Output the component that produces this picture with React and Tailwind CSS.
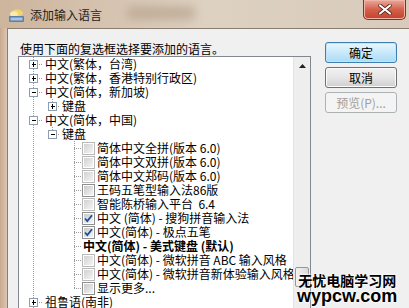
const rows = [
  { t: '中文(繁体，台湾)', lv: 0, exp: '+' },
  { t: '中文(繁体，香港特别行政区)', lv: 0, exp: '+' },
  { t: '中文(简体，新加坡)', lv: 0, exp: '-' },
  { t: '键盘', lv: 1, exp: '+' },
  { t: '中文(简体，中国)', lv: 0, exp: '-' },
  { t: '键盘', lv: 1, exp: '-' },
  { t: '简体中文全拼(版本 6.0)', lv: 2, cb: 'light' },
  { t: '简体中文双拼(版本 6.0)', lv: 2, cb: 'light' },
  { t: '简体中文郑码(版本 6.0)', lv: 2, cb: 'light' },
  { t: '王码五笔型输入法86版', lv: 2, cb: 'off' },
  { t: '智能陈桥输入平台  6.4', lv: 2, cb: 'light' },
  { t: '中文 (简体) - 搜狗拼音输入法', lv: 2, cb: 'on' },
  { t: '中文(简体) - 极点五笔', lv: 2, cb: 'on' },
  { t: '中文(简体) - 美式键盘 (默认)', lv: 2, bold: true },
  { t: '中文(简体) - 微软拼音 ABC 输入风格', lv: 2, cb: 'light' },
  { t: '中文(简体) - 微软拼音新体验输入风格', lv: 2, cb: 'light' },
  { t: '显示更多...', lv: 2, cb: 'off', last: true },
  { t: '祖鲁语(南非)', lv: 0, exp: '+' },
];

const DOT = '#9c9c9c';

// one guide column of the tree: dotted lines and an optional +/- box
const Guide = ({ w, x, top = true, bottom = true, h, box }) => (
  <svg width={w} height={14} className="shrink-0 block" shapeRendering="crispEdges">
    {(top || bottom) && (
      <line x1={x + 0.5} x2={x + 0.5} y1={top ? 0 : 7} y2={bottom ? 14 : 7} stroke={DOT} strokeDasharray="1 1" />
    )}
    {h && <line x1={x} x2={h} y1={7.5} y2={7.5} stroke={DOT} strokeDasharray="1 1" />}
    {box && (
      <g>
        <rect x={x - 3.5} y={3.5} width={8} height={8} fill="#fff" stroke="#8f9db0" />
        <line x1={x - 1} x2={x + 3} y1={7.5} y2={7.5} stroke="#000" />
        {box === '+' && <line x1={x + 0.5} x2={x + 0.5} y1={5} y2={10} stroke="#000" />}
      </g>
    )}
  </svg>
);

const Check = ({ kind }) => {
  const border = kind === 'light' ? '#b9b9b9' : '#8e8f8f';
  return (
    <svg width={13} height={13} className="shrink-0 block" shapeRendering="crispEdges">
      <defs>
        <linearGradient id={`cb-${kind}`} x1="0" y1="0" x2="1" y2="1">
          <stop offset="0" stopColor={kind === 'light' ? '#d2d2d2' : '#c9c9c9'} />
          <stop offset="1" stopColor="#f4f4f4" />
        </linearGradient>
      </defs>
      <rect x={0.5} y={0.5} width={12} height={12} fill="#fff" stroke={border} />
      <rect x={2} y={2} width={9} height={9} fill={`url(#cb-${kind})`} />
      {kind === 'on' && (
        <path d="M3 6.5 L5.3 9 L10 3.2" fill="none" stroke="#1d4c9c" strokeWidth="1.8" shapeRendering="auto" />
      )}
    </svg>
  );
};

const TreeRow = ({ r }) => (
  <div className="flex items-center h-[14px]">
    {r.lv === 0 ? (
      <Guide w={24} x={14} h={24} box={r.exp} />
    ) : (
      <Guide w={24} x={14} />
    )}
    {r.lv === 1 && <Guide w={17} x={9} bottom={false} h={17} box={r.exp} />}
    {r.lv === 2 && (
      <>
        <div className="w-[17px] shrink-0" />
        <Guide w={22} x={14} bottom={!r.last} h={22} />
      </>
    )}
    {r.cb && <Check kind={r.cb} />}
    <span className={`whitespace-pre text-[12px] leading-[14px] text-black ${r.bold ? 'font-bold ml-[1px]' : 'ml-[2px]'}`}>
      {r.t}
    </span>
  </div>
);

const Btn = ({ children, kind }) => {
  const cls =
    kind === 'default'
      ? 'border-[#3c7fb1] bg-gradient-to-b from-[#eaf6fd] to-[#a9dbf6] shadow-[inset_0_0_0_1px_#bfe6fa]'
      : kind === 'disabled'
      ? 'border-[#adb2b5] bg-[#f4f4f4] text-[#a0a0a0]'
      : 'border-[#707070] bg-gradient-to-b from-[#f2f2f2] via-[#e6e6e6] to-[#cfcfcf] shadow-[inset_0_0_0_1px_#fbfbfb]';
  return (
    <div className={`w-[72px] h-[21px] rounded-[3px] border flex items-center justify-center text-[12px] ${cls}`}>
      {children}
    </div>
  );
};

export default function App() {
  return (
    <div className="relative w-[409px] h-[308px] overflow-hidden bg-gradient-to-r from-[#cdb49c] via-[#ddd1c2] to-[#d8cbbb] font-['Noto_Sans_CJK_SC','Liberation_Sans',sans-serif] text-black">
      {/* title bar */}
      <div className="flex h-[28px]">
        <div className="flex items-center pl-[8px] pt-[2px] gap-[5px]">
          <svg width="17" height="15" viewBox="0 0 17 15">
            <ellipse cx="9" cy="5" rx="6" ry="3.5" fill="#f3d36b" />
            <ellipse cx="6" cy="6" rx="4" ry="2.5" fill="#fbeab0" />
            <rect x="1" y="8" width="15" height="6" rx="1" fill="#5b7fa6" />
            <rect x="2.5" y="9.5" width="12" height="3" fill="#a8c3df" />
          </svg>
          <span className="text-[12px] leading-[14px] text-[#1e1e1e]">添加输入语言</span>
        </div>
        <div className="ml-[24px] mt-[6px] w-[70px] h-[14px] rounded-full bg-[#b8a48e] blur-[5px] opacity-70" />
        <div className="ml-auto mr-[3px] w-[43px] h-[20px] rounded-b-[5px] border border-t-0 border-[#7d3427] bg-gradient-to-b from-[#e9a99b] via-[#d4604a] to-[#c2412c] flex items-center justify-center shadow-[inset_0_0_0_1px_#f0b5a8]">
          <svg width="14" height="11" viewBox="0 0 14 11">
            <path d="M2 1.5 L12 9.5 M12 1.5 L2 9.5" stroke="#5a2018" strokeWidth="3.6" strokeLinecap="round" />
            <path d="M2 1.5 L12 9.5 M12 1.5 L2 9.5" stroke="#fff" strokeWidth="2.2" strokeLinecap="round" />
          </svg>
        </div>
      </div>

      {/* window body */}
      <div className="flex h-[280px]">
        <div className="w-[7px] shrink-0 bg-gradient-to-r from-[#c9a98d] to-[#dcc6b2]" />
        <div className="flex-1 bg-[#f0f0f0] border-l border-t border-[#8a7d72] flex">
          <div className="flex flex-col pl-[10px]">
            <div className="pl-[2px] pt-[13px] h-[33px] text-[12px] leading-[14px]">
              使用下面的复选框选择要添加的语言。
            </div>
            <div className="w-[293px] h-[268px] border border-[#828790] bg-white flex">
              <div className="flex-1 min-w-0 overflow-hidden flex flex-col">
                {rows.map((r, i) => (
                  <TreeRow key={i} r={r} />
                ))}
              </div>
              <div className="w-[17px] shrink-0 bg-[#eeeeee] border-l border-[#e3e3e3] flex flex-col">
                <div className="h-[17px] flex items-center justify-center">
                  <svg width="7" height="4" viewBox="0 0 7 4">
                    <path d="M0 4 L3.5 0 L7 4 Z" fill="#202020" />
                  </svg>
                </div>
                <div className="flex-1" />
                <div className="h-[20px] mx-[1px] rounded-[2px] border border-[#979797] bg-gradient-to-r from-[#f3f3f3] to-[#dadada] mb-[22px]" />
              </div>
            </div>
          </div>
          <div className="flex flex-col gap-[4px] pl-[14px] pt-[13px]">
            <Btn kind="default">确定</Btn>
            <Btn>取消</Btn>
            <Btn kind="disabled">预览(P)...</Btn>
          </div>
        </div>
      </div>

      {/* watermark */}
      <div className="absolute left-[297px] top-[273px] flex flex-col items-center leading-none [text-shadow:0_0_2px_#fff,0_0_2px_#fff,0_0_3px_#fff]">
        <span className="text-[14px] font-bold leading-[15px]">无忧电脑学习网</span>
        <span className="font-['Liberation_Sans',sans-serif] text-[18px] font-bold leading-[17px]">wypcw.com</span>
      </div>
    </div>
  );
}
